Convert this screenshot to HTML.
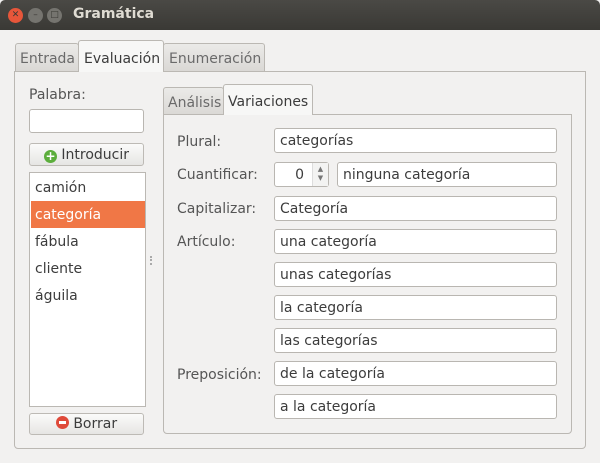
<!DOCTYPE html>
<html><head><meta charset="utf-8"><style>
*{box-sizing:border-box;margin:0;padding:0}
body{width:600px;height:463px;background:#f2f1f0;font-family:"DejaVu Sans","Liberation Sans",sans-serif;font-size:14px;letter-spacing:0px;color:#3c3c3c;position:relative;overflow:hidden}
.abs{position:absolute}
.title{left:0;top:0;width:600px;height:30px;background:linear-gradient(#4a4945,#3a3935);border-radius:5px 5px 0 0}
.title span{position:absolute;left:73px;top:6px;color:#dfdbd2;font-weight:bold;font-size:14px}
.wb{position:absolute;top:8px;width:15px;height:15px;border-radius:50%;font-size:9px;line-height:15px;text-align:center;color:#3a3935;letter-spacing:0}
.tab{position:absolute;border:1px solid #bbb8b3;border-bottom:none;border-radius:3px 3px 0 0;background:linear-gradient(#ebeae8,#dad8d5);color:#6a6a6a;font-size:14px;padding-left:4px;white-space:nowrap}
.tab.on{background:#f7f7f6;color:#3c3c3c;z-index:2}
.frame{position:absolute;border:1px solid #bbb8b3;border-radius:0 0 4px 4px;background:#f2f1f0}
.entry{position:absolute;background:#fff;border:1px solid #b9b6b1;border-radius:3px;height:25px;padding:4px 0 0 5px;color:#3c3c3c;white-space:nowrap}
.lbl{position:absolute;color:#555}
.btn{position:absolute;border:1px solid #bdbab5;border-radius:3px;background:linear-gradient(#fbfbfa,#e6e5e3);text-align:center;color:#3c3c3c;font-size:14px}
.row{position:absolute;left:1px;width:114px;height:27px;padding:6px 0 0 4px}
</style></head><body>
<div class="abs title"><div class="wb" style="left:8px;background:#e7563a">✕</div><div class="wb" style="left:28px;background:#75746f">–</div><div class="wb" style="left:47px;background:#75746f">□</div><span>Gramática</span></div>

<div class="tab" style="left:15px;top:43px;width:64px;height:28px;padding-top:7px;padding-left:4px">Entrada</div>
<div class="tab on" style="left:78px;top:40px;width:86px;height:32px;padding-top:10px;padding-left:5px">Evaluación</div>
<div class="tab" style="left:163px;top:43px;width:102px;height:28px;padding-top:7px;padding-left:5px">Enumeración</div>
<div class="frame" style="left:14px;top:71px;width:572px;height:378px;background:#f2f1f0"></div>

<div class="lbl" style="left:29px;top:87px">Palabra:</div>
<div class="entry" style="left:29px;top:109px;width:115px;height:24px"></div>
<div class="btn" style="left:29px;top:143px;width:115px;height:23px;padding-top:3px"><span style="display:inline-block;width:13px;height:13px;border-radius:50%;background:#5cae3c;color:#fff;font-size:12px;line-height:13px;font-weight:bold;vertical-align:-1px">+</span> Introducir</div>
<div class="abs" style="left:29px;top:172px;width:117px;height:235px;background:#fff;border:1px solid #bbb8b3">
<div class="row" style="top:1px">camión</div>
<div class="row" style="top:28px;background:#f07746;color:#fff">categoría</div>
<div class="row" style="top:55px">fábula</div>
<div class="row" style="top:82px">cliente</div>
<div class="row" style="top:109px">águila</div>
</div>
<div class="abs" style="left:150px;top:256px;width:2px;height:9px;border-left:2px dotted #aaa"></div>
<div class="btn" style="left:29px;top:413px;width:115px;height:22px;padding-top:2px"><span style="display:inline-block;width:13px;height:13px;border-radius:50%;background:#df4a3a;vertical-align:-1px;position:relative"><span style="position:absolute;left:3px;top:5px;width:7px;height:3px;background:#fff"></span></span> Borrar</div>

<div class="tab" style="left:163px;top:87px;width:61px;height:28px;padding-top:7px;padding-left:4px">Análisis</div>
<div class="tab on" style="left:223px;top:84px;width:90px;height:31px;padding-top:9px;padding-left:4px">Variaciones</div>
<div class="frame" style="left:163px;top:114px;width:409px;height:320px"></div>

<div class="lbl" style="left:177px;top:134px">Plural:</div>
<div class="entry" style="left:274px;top:128px;width:283px">categorías</div>
<div class="lbl" style="left:177px;top:167px">Cuantificar:</div>
<div class="entry" style="left:274px;top:162px;width:55px;padding:4px 24px 0 0;text-align:right">0<span style="position:absolute;right:0;top:0;width:16px;height:23px;border-left:1px solid #ddd;background:#f3f3f2;font-size:7px;line-height:9px;text-align:center;color:#777;padding-top:2px">▲<br>▼</span></div>
<div class="entry" style="left:337px;top:162px;width:220px">ninguna categoría</div>
<div class="lbl" style="left:177px;top:201px">Capitalizar:</div>
<div class="entry" style="left:274px;top:196px;width:283px">Categoría</div>
<div class="lbl" style="left:177px;top:234px">Artículo:</div>
<div class="entry" style="left:274px;top:229px;width:283px">una categoría</div>
<div class="entry" style="left:274px;top:262px;width:283px">unas categorías</div>
<div class="entry" style="left:274px;top:295px;width:283px">la categoría</div>
<div class="entry" style="left:274px;top:328px;width:283px">las categorías</div>
<div class="lbl" style="left:177px;top:367px">Preposición:</div>
<div class="entry" style="left:274px;top:361px;width:283px">de la categoría</div>
<div class="entry" style="left:274px;top:394px;width:283px">a la categoría</div>
</body></html>
